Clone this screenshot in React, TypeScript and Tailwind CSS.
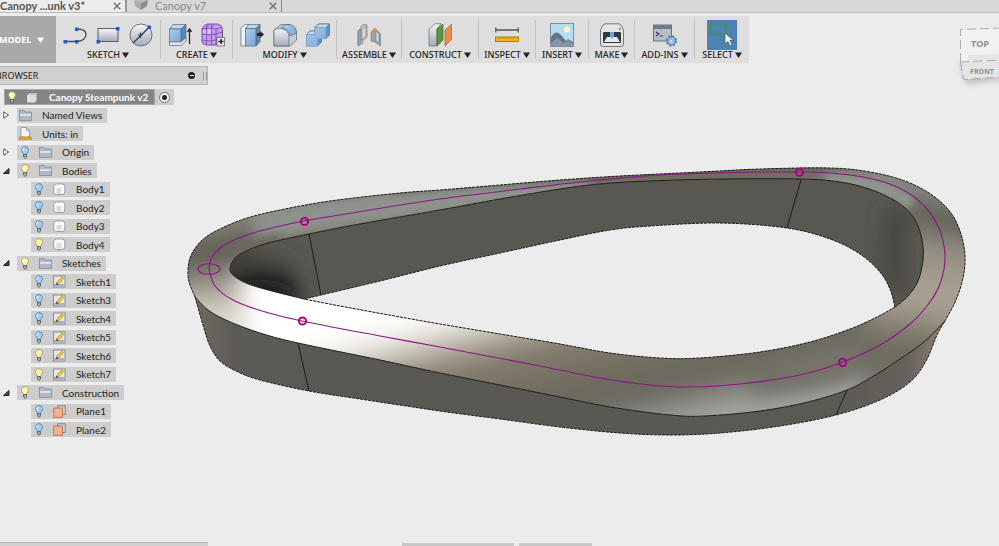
import { useState } from 'react';

const tools = [
  { name: 'SKETCH', icons: ['polyline', 'rect', 'circle'], width: 'w-[104px]' },
  { name: 'CREATE', icons: ['extrude', 'form'], width: 'w-[72px]' },
  { name: 'MODIFY', icons: ['press', 'fillet', 'combine'], width: 'w-[104px]' },
  { name: 'ASSEMBLE', icons: ['joint'], width: 'w-[65px]' },
  { name: 'CONSTRUCT', icons: ['plane'], width: 'w-[77px]' },
  { name: 'INSPECT', icons: ['measure'], width: 'w-[57px]' },
  { name: 'INSERT', icons: ['image'], width: 'w-[53px]' },
  { name: 'MAKE', icons: ['print'], width: 'w-[46px]' },
  { name: 'ADD-INS', icons: ['script'], width: 'w-[60px]' },
  { name: 'SELECT', icons: ['select'], width: 'w-[55px]' },
];

const rows = [
  { name: 'Named Views', level: 1, icon: 'folder', arrow: 'closed' },
  { name: 'Units: in', level: 1, icon: 'units' },
  { name: 'Origin', level: 1, icon: 'folder', bulb: 'off', arrow: 'closed' },
  { name: 'Bodies', level: 1, icon: 'folder', bulb: 'on', arrow: 'open' },
  { name: 'Body1', level: 2, icon: 'body', bulb: 'off' },
  { name: 'Body2', level: 2, icon: 'body', bulb: 'off' },
  { name: 'Body3', level: 2, icon: 'body', bulb: 'off' },
  { name: 'Body4', level: 2, icon: 'body', bulb: 'on' },
  { name: 'Sketches', level: 1, icon: 'folder', bulb: 'on', arrow: 'open' },
  { name: 'Sketch1', level: 2, icon: 'sketch', bulb: 'off' },
  { name: 'Sketch3', level: 2, icon: 'sketch', bulb: 'off' },
  { name: 'Sketch4', level: 2, icon: 'sketch', bulb: 'off' },
  { name: 'Sketch5', level: 2, icon: 'sketch', bulb: 'off' },
  { name: 'Sketch6', level: 2, icon: 'sketch', bulb: 'on' },
  { name: 'Sketch7', level: 2, icon: 'sketch', bulb: 'on' },
  { name: 'Construction', level: 1, icon: 'folder', bulb: 'on', arrow: 'open' },
  { name: 'Plane1', level: 2, icon: 'planes', bulb: 'off' },
  { name: 'Plane2', level: 2, icon: 'planes', bulb: 'off' },
];

type Point = [number, number];

// smooth curve through the points (Catmull-Rom converted to beziers)
function curve(pts: Point[], start = 'M') {
  let d = `${start}${pts[0][0]} ${pts[0][1]}`;
  for (let i = 0; i < pts.length - 1; i++) {
    const a = pts[i - 1] || pts[i];
    const b = pts[i];
    const c = pts[i + 1];
    const e = pts[i + 2] || c;
    d += `C${b[0] + (c[0] - a[0]) / 6} ${b[1] + (c[1] - a[1]) / 6} ${c[0] - (e[0] - b[0]) / 6} ${c[1] - (e[1] - b[1]) / 6} ${c[0]} ${c[1]}`;
  }
  return d;
}

const outerBack: Point[] = [[195, 297], [189, 282], [188, 270], [190, 258], [196, 247], [206, 237], [222, 228], [247, 218], [280, 210], [330, 201], [400, 193], [440, 190], [500, 185], [560, 180], [620, 176], [700, 172], [760, 169], [830, 168], [870, 172], [905, 181], [932, 195], [951, 213], [961, 234], [965, 256], [963, 278], [956, 300], [945, 321]];
const outerFront: Point[] = [[945, 321], [925, 341], [900, 359], [872, 377], [847, 390], [808, 402], [760, 411], [705, 416], [670, 415], [610, 407], [555, 396], [500, 385], [440, 373], [380, 360], [298, 343], [260, 333], [228, 321], [208, 310], [195, 297]];
const skirt: Point[] = [[195, 297], [203, 325], [210, 346], [220, 361], [236, 371], [260, 380], [309, 391], [360, 399], [440, 411], [500, 419], [560, 427], [620, 433], [670, 435], [720, 433], [780, 426], [836, 415], [880, 400], [910, 382], [926, 361], [937, 335], [945, 321]];
const innerBack: Point[] = [[304, 299], [268, 290], [246, 283], [233, 275], [230, 268], [235, 258], [246, 251], [268, 243], [309, 234], [360, 224], [440, 210], [500, 199], [560, 189], [600, 184], [650, 181], [720, 179], [800, 179], [840, 182], [872, 190], [900, 204], [915, 220], [922, 240], [923, 260], [918, 281], [908, 296], [895, 307]];
const innerFront: Point[] = [[895, 307], [877, 317], [850, 329], [810, 342], [760, 352], [700, 358], [660, 358], [610, 353], [560, 344], [500, 334], [440, 324], [400, 317], [340, 306], [304, 299]];
const holeBack: Point[] = [[304, 299], [321, 295], [380, 281], [440, 266], [500, 253], [560, 240], [610, 230], [650, 226], [720, 223], [787, 228], [830, 239], [860, 254], [880, 272], [890, 289], [895, 307]];
const sketchLine: Point[] = [[209, 269], [211, 259], [219, 249], [234, 240], [260, 231], [304, 221], [370, 210], [440, 199], [520, 189], [600, 180], [680, 174], [799, 172], [850, 175], [890, 184], [919, 201], [938, 226], [945, 255], [941, 281], [930, 302], [910, 324], [880, 345], [843, 362], [800, 375], [740, 384], [690, 387], [650, 385], [600, 378], [540, 366], [440, 347], [380, 336], [302, 321], [262, 311], [233, 300], [215, 286], [209, 269]];

const topFace = curve(outerBack) + curve(outerFront, 'L') + 'Z' + curve(innerBack) + curve(innerFront, 'L') + 'Z';
const innerWall = curve(innerBack) + 'L' + curve([...holeBack].reverse(), '') + 'Z';
const outerWall = curve(skirt) + curve(outerFront, 'L') + 'Z';

function Model() {
  return (
    <svg viewBox="0 0 999 476" className="col-start-1 row-start-1 block w-full overflow-visible" role="img" aria-label="Canopy model">
      <defs>
        <clipPath id="face"><path d={topFace} clipRule="evenodd" /></clipPath>
        <clipPath id="inner"><path d={innerWall} /></clipPath>
        <filter id="soft" filterUnits="userSpaceOnUse" x="50" y="50" width="1100" height="500"><feGaussianBlur stdDeviation="11" /></filter>
        <filter id="fine" filterUnits="userSpaceOnUse" x="50" y="50" width="1100" height="500"><feGaussianBlur stdDeviation="4" /></filter>
        <filter id="cubeShadow" x="-30%" y="-30%" width="160%" height="180%"><feGaussianBlur stdDeviation="3" /></filter>
        <linearGradient id="left" gradientUnits="userSpaceOnUse" x1="210" y1="205" x2="225" y2="325">
          <stop offset="0" stopColor="#868b85" />
          <stop offset="0.16" stopColor="#83857d" />
          <stop offset="0.34" stopColor="#5f5b50" />
          <stop offset="0.43" stopColor="#615d52" />
          <stop offset="0.62" stopColor="#918c84" />
          <stop offset="0.85" stopColor="#cfcabf" />
          <stop offset="1" stopColor="#dedad0" />
        </linearGradient>
        <linearGradient id="front" gradientUnits="userSpaceOnUse" x1="98.6" y1="382.5" x2="146" y2="566.5">
          <stop offset="0.08" stopColor="#fff" />
          <stop offset="0.18" stopColor="#eae7df" />
          <stop offset="0.3" stopColor="#aea799" />
          <stop offset="0.4" stopColor="#857d6f" />
          <stop offset="0.52" stopColor="#7b7467" />
          <stop offset="0.68" stopColor="#6b685b" />
          <stop offset="0.8" stopColor="#6d6b62" />
          <stop offset="0.93" stopColor="#999995" />
          <stop offset="1" stopColor="#a5a5a3" />
        </linearGradient>
        <linearGradient id="right" gradientUnits="userSpaceOnUse" x1="930" y1="168" x2="895" y2="390">
          <stop offset="0" stopColor="#8b908a" />
          <stop offset="0.1" stopColor="#838680" />
          <stop offset="0.22" stopColor="#5c594e" />
          <stop offset="0.32" stopColor="#89867f" />
          <stop offset="0.42" stopColor="#a09888" />
          <stop offset="0.6" stopColor="#aaa294" />
          <stop offset="0.72" stopColor="#857f71" />
          <stop offset="0.84" stopColor="#69665a" />
          <stop offset="1" stopColor="#7c7b74" />
        </linearGradient>
        <linearGradient id="skirtFill" gradientUnits="userSpaceOnUse" x1="190" y1="0" x2="945" y2="0">
          <stop offset="0" stopColor="#6f6c62" />
          <stop offset="0.06" stopColor="#5d5b55" />
          <stop offset="0.2" stopColor="#595751" />
          <stop offset="0.85" stopColor="#5a5952" />
          <stop offset="0.95" stopColor="#67615b" />
          <stop offset="1" stopColor="#8b8373" />
        </linearGradient>
      </defs>
      <g transform="translate(0 -66)">
        <path d={innerWall} fill="#595751" />
        <g clipPath="url(#inner)">
          <path d="M215 240L290 265L300 320L220 300Z" fill="#3f3e3a" filter="url(#soft)" />
          <ellipse cx="262" cy="292" rx="36" ry="12" fill="#0c0c0c" filter="url(#soft)" />
          <path d="M908 210C900 240 898 260 905 300L885 280C888 250 885 230 888 210Z" fill="#403e38" filter="url(#soft)" />
        </g>
        <path d={outerWall} fill="url(#skirtFill)" />
        <path d={topFace} fill="#7b7669" fillRule="evenodd" />
        <g clipPath="url(#face)">
          <path d={curve([[250, 226], [350, 211], [440, 199], [530, 189], [590, 184]])} fill="none" stroke="#8d928c" strokeWidth="28" filter="url(#fine)" />
          <path d={curve([[390, 188], [500, 180], [620, 174], [760, 168], [840, 166]])} fill="none" stroke="#55534a" strokeWidth="8" filter="url(#fine)" />
          <path d="M100 120H252V420H100Z" fill="url(#left)" filter="url(#soft)" />
          <path d={curve([[225, 255], [250, 246], [280, 238]])} fill="none" stroke="#68655b" strokeWidth="8" filter="url(#fine)" />
          <path d="M240 268H870V480H240Z" fill="url(#front)" filter="url(#soft)" />
          <path d={curve([[750, 384], [800, 379], [850, 366], [910, 342]])} fill="none" stroke="#6a675b" strokeWidth="22" filter="url(#soft)" />
          <path d="M866 150H1060V450H866Z" fill="url(#right)" filter="url(#soft)" />
          <path d={curve([[600, 180], [700, 176], [820, 173]])} fill="none" stroke="#706d61" strokeWidth="12" filter="url(#fine)" />
          <path d={curve([[825, 179], [855, 182], [890, 192], [912, 204]])} fill="none" stroke="#929892" strokeWidth="13" filter="url(#fine)" />
        </g>
        <g fill="none" stroke="#1d1c1a" strokeWidth="1">
          <path d={curve(innerBack)} />
          <path d={curve(outerFront)} />
          <path d="M309 234L321 295M298 343L309 391M801 180L787 228M847 390L836 415" />
          <g strokeDasharray="3 1">
            <path d={curve(outerBack)} />
            <path d={curve(innerFront)} />
            <path d={curve(holeBack)} />
            <path d={curve(skirt)} />
          </g>
        </g>
        <g fill="none" stroke="#8b1585" strokeWidth="1.1">
          <path d={curve(sketchLine)} />
          <ellipse cx="209" cy="269" rx="11" ry="5.3" />
        </g>
        <g fill="none" stroke="#b00080" strokeWidth="2">
          <circle cx="304.500" cy="221.500" r="3.600" />
          <circle cx="302.500" cy="321" r="3.600" />
          <circle cx="799.500" cy="172.300" r="3.600" />
          <circle cx="842.600" cy="362.400" r="3.600" />
        </g>
        <path d="M960 62L966 84L1004 79V58Z" fill="#bbb" filter="url(#cubeShadow)" />
        <path d="M960.500 29.500L1004 28V59L960.500 62Z" fill="#f1f1f1" />
        <path d="M960.500 62L1004 59V77L963.500 79.500Z" fill="#e4e4e5" />
        <path d="M968 55L999 54V61L968 62Z" fill="#e3e5e8" />
        <path d="M960.500 62V29.500L1004 28M960.500 62L1004 60M960.500 62L963.500 79.500L1004 77" fill="none" stroke="#a9abad" strokeDasharray="9 4" />
        <g className="font-['Open_Sans',sans-serif] font-bold" fill="#8b9096" textAnchor="middle">
          <text x="980" y="47" fontSize="9">TOP</text>
          <text x="982" y="74" fontSize="7">FRONT</text>
        </g>
      </g>
    </svg>
  );
}

function ToolIcon({ name }: { name: string }) {
  const outline = '#5d6670';
  return (
    <svg viewBox="0 0 24 24" className="size-6" aria-hidden="true">
      <defs>
        <linearGradient id={`${name}-grey`} x1="0" y1="0" x2="0" y2="1"><stop stopColor="#f5f6f8" /><stop offset="1" stopColor="#a3abba" /></linearGradient>
        <linearGradient id={`${name}-blue`} x1="0" y1="0" x2="1" y2="1"><stop stopColor="#a9cdf0" /><stop offset="1" stopColor="#79a5d6" /></linearGradient>
      </defs>
      {name === 'polyline' && (
        <g>
          <path d="M2 18.500H14C20 18.500 23 15 23 11.500S20 6 14 6" fill="none" stroke="#444b55" strokeWidth="1.300" />
          <path d="M.5 17H4V20.500H.5ZM12 17H15.500V20.500H12ZM12 4.500H15.500V8H12Z" fill="#2459c8" />
        </g>
      )}
      {name === 'rect' && (
        <g>
          <rect x="2" y="5.500" width="20" height="13" fill="url(#rect-grey)" stroke="#555e69" />
          <path d="M.5 17H4V20.500H.5ZM20 4H23.500V7.500H20Z" fill="#2459c8" />
        </g>
      )}
      {name === 'circle' && (
        <g>
          <circle cx="12" cy="12" r="11" fill="url(#circle-grey)" stroke="#6a727c" />
          <path d="M4 20L20 4.500M9 12H14M11.500 9.500V15" stroke="#333a44" strokeWidth="1.200" />
          <path d="M18.500 2.500H22V6H18.500Z" fill="#2459c8" />
        </g>
      )}
      {name === 'extrude' && (
        <g stroke={outline} strokeWidth=".7">
          <path d="M1.500 18V22.500H13L18 18V14Z" fill="#e5e7eb" />
          <path d="M1.500 6L5 1.500H18L13 6Z" fill="#b9d9f5" />
          <path d="M13 6L18 1.500V14.500L13 19Z" fill="#5687bd" />
          <path d="M1.500 6H13V19H1.500Z" fill="url(#extrude-blue)" />
          <path d="M21.500 21V7M19.500 9L21.500 6L23.500 9" fill="none" stroke="#22262c" strokeWidth="1.300" />
        </g>
      )}
      {name === 'form' && (
        <g>
          <path d="M1 6Q3 1 8 1H17Q21 2 21.500 6V16Q20 20 15 22H5Q1 21 1 18Z" fill="#c79bf5" stroke="#78529f" />
          <path d="M1 6Q8 4 15 6Q19 5 21 4M1 11Q8 13 15 11L21.500 9M1 17Q8 19 15 17L21.500 14M5.500 2.500V21.500M10.500 2V22M15 6V22M8 1L5 5M13 1L10 5" fill="none" stroke="#744a9f" strokeWidth=".8" />
          <path d="M2 7H5V10H2ZM6.500 6.500H10V10.500H6.500Z" fill="#dfc4ff" />
          <path d="M16 14.500H23.500V23H16Z" fill="#efefef" stroke="#555" strokeWidth=".7" />
          <path d="M17.500 18.500H22.500M20 16V21" stroke="#222" strokeWidth="1.500" />
        </g>
      )}
      {name === 'press' && (
        <g stroke={outline} strokeWidth=".7">
          <path d="M1 5L5 1.500H9L6 5V23H1Z" fill="#f1f2f4" />
          <path d="M5.500 5.500L9 1.500H20L16 5.500Z" fill="#b9d9f5" />
          <path d="M16 5.500L20 1.500V18.500L16 23Z" fill="#5687bd" />
          <path d="M5.500 5.500H16V23H5.500Z" fill="url(#press-blue)" />
          <path d="M17 10H20V8L24 11.500L20 15V13H17Z" fill="#20242b" stroke="none" />
        </g>
      )}
      {name === 'fillet' && (
        <g stroke={outline} strokeWidth=".7">
          <path d="M1 7L8 1.500H16Q23 3 23.500 10V17L17 23H1Z" fill="#c8ccd2" />
          <path d="M8 5L13 1.500H17Q23 3 23.500 10L17 13Q16 6 8 5Z" fill="url(#fillet-blue)" />
          <path d="M1 7Q6 4 10 6Q16 8 16 14V23H1Z" fill="url(#fillet-grey)" />
        </g>
      )}
      {name === 'combine' && (
        <g stroke={outline} strokeWidth=".7">
          <path d="M9 4L13 1H23.500V12L20 15.500H15.500V19L11.500 23H.5V11.500L4 8H9Z" fill="#5f90c7" />
          <path d="M9 4L13 1H23.500L20 4.500H9ZM.5 11.500L4 8H9V11.500Z" fill="#c3ddf5" />
          <path d="M9 4.500H20V15.500H11.500V23H.5V11.500H9Z" fill="url(#combine-blue)" stroke="#7aa3ce" />
        </g>
      )}
      {name === 'joint' && (
        <g stroke="#7b838c" strokeWidth=".7">
          <path d="M1 8L4 5V3Q7 0 10 2V14L6 17V20L1 23Z" fill="#c4c9cf" />
          <path d="M4 6V20L1 23V8ZM14 9L18 5L23.500 11V23L18 19L14 18Z" fill="#9aa2ab" />
          <path d="M5 6L9 3V13L5 17ZM19 8L22 11V20L19 18Z" fill="#d7dade" />
          <path d="M9 9L11 11L9 13ZM16 6L18 5V10H15Z" fill="#e7904d" stroke="none" />
        </g>
      )}
      {name === 'plane' && (
        <g strokeWidth=".7">
          <path d="M1 6L7 .8H13L9 6V23H1Z" fill="url(#plane-grey)" stroke={outline} />
          <path d="M9 6L15 1V17L9 23Z" fill="#55983d" stroke="#42672f" />
          <path d="M17 7L24 1V16L17 23Z" fill="#e98b4d" stroke="#ae5c29" />
        </g>
      )}
      {name === 'measure' && (
        <g>
          <path d="M.5 7H23.500M.8 4.500V9.500M23.200 4.500V9.500" stroke="#555" strokeWidth="1.300" />
          <rect x=".5" y="14" width="23" height="4.500" fill="#f3b51f" stroke="#b47a0a" />
          <path d="M4 14V16M7 14V16M10 14V16M13 14V16M16 14V16M19 14V16" stroke="#875600" strokeWidth=".5" />
        </g>
      )}
      {name === 'image' && (
        <g>
          <rect x=".5" y=".5" width="23" height="23" fill="#b6dcf1" stroke="#7790a3" />
          <circle cx="17" cy="6.500" r="3" fill="#fff6bd" />
          <path d="M1 14Q6 6 11 12L16 18L18 16L23 19V23H1Z" fill="#63738a" />
          <path d="M1 20L7 15L14 20L19 17L23 21V23H1Z" fill="#8794a7" />
        </g>
      )}
      {name === 'print' && (
        <g>
          <path d="M3 2L5 .8H19L21 2L23.500 7V21Q23.500 23.500 21 23.500H3Q.5 23.500 .5 21V7Z" fill="#e4e5e7" stroke="#74787d" />
          <rect x="3" y="9" width="18" height="11" rx="1" fill="#35393e" />
          <path d="M7 14H17L20 19H4Z" fill="#e8eaed" />
          <path d="M10 9H14V13L12 16L10 13Z" fill="#6ba8e5" />
          <circle cx="20" cy="6" r="1" fill="#3b9d45" />
        </g>
      )}
      {name === 'script' && (
        <g>
          <rect x=".5" y="2" width="18" height="16" fill="#b8bec9" stroke="#697180" />
          <path d="M1 2H18V6H1Z" fill="#727b8c" />
          <path d="M3 9L6 11L3 13M7 13H10" fill="none" stroke="#313945" strokeWidth="1.200" />
          <circle cx="18.500" cy="18" r="4" fill="#a8c8e9" stroke="#6488b5" strokeWidth="1.500" />
          <circle cx="18.500" cy="18" r="4.800" fill="none" stroke="#6488b5" strokeWidth="2" strokeDasharray="2 1.770" />
          <circle cx="18.500" cy="18" r="1.500" fill="#f3f7fb" stroke="#6488b5" strokeWidth=".6" />
        </g>
      )}
      {name === 'select' && (
        <g>
          <rect x="1" y="1" width="15" height="10" fill="none" stroke="#4a9438" strokeWidth="1.400" />
          <path d="M15 10V21L17.800 18.500L20 23L22.200 22L20 17.500H23.500Z" fill="#f4f4f4" stroke="#4c5d70" strokeWidth=".8" />
        </g>
      )}
    </svg>
  );
}

function Bulb({ on }: { on: boolean }) {
  return (
    <svg viewBox="0 0 8 13" className="block h-[13px] w-2" aria-hidden="true">
      <path d="M2.300 8.500Q2.300 7.300 1.300 6Q.3 4.800 .5 3.500Q1 .6 4 .6T7.500 3.500Q7.700 4.800 6.700 6Q5.700 7.300 5.700 8.500Z" fill={on ? '#fff6a8' : '#9fcdf4'} stroke={on ? '#9c9566' : '#587da2'} strokeWidth=".8" />
      <path d="M3 2Q1.800 3 2.200 5" fill="none" stroke="#fff" />
      <path d="M2.500 8.500H5.500V11L4 12.500L2.500 11Z" fill="#aaa" stroke="#555" strokeWidth=".8" />
    </svg>
  );
}

function RowIcon({ name }: { name: string }) {
  return (
    <svg viewBox="0 0 13 13" className="block size-[13px]" aria-hidden="true">
      {name === 'folder' && (
        <g>
          <path d="M.5 1.500H5L6 3H12.500V11.500H.5Z" fill="#b0b8c8" stroke="#838a98" strokeWidth=".8" />
          <path d="M1 5H12V7H1Z" fill="#dcdfe6" />
        </g>
      )}
      {name === 'units' && (
        <g>
          <path d="M2 .5H7.500L10.500 3.500V10H2Z" fill="#f5f6f8" stroke="#8b919c" strokeWidth=".8" />
          <path d="M7.500 .5V3.500H10.500" fill="none" stroke="#8b919c" strokeWidth=".8" />
          <path d="M.5 10H12.500V12.500H.5Z" fill="#e6a229" stroke="#b57a18" strokeWidth=".5" />
        </g>
      )}
      {name === 'body' && (
        <g>
          <rect x=".8" y="1" width="11" height="10.500" rx="2.500" fill="#fafafa" stroke="#8d8d8d" strokeWidth=".8" />
          <path d="M3.500 5H8.500V10.500H3.500Z" fill="#dcdcdf" />
        </g>
      )}
      {name === 'root' && (
        <g>
          <path d="M1 4L3 1.500H11.500V9L9.500 11.500H1Z" fill="#b9c0ca" stroke="#68707b" strokeWidth=".6" />
          <path d="M1 4H9.500V11.500H1Z" fill="#dce1e8" />
        </g>
      )}
      {name === 'sketch' && (
        <g>
          <rect x=".5" y="1" width="11.500" height="11" fill="#e6e8ed" stroke="#7d858f" strokeWidth=".9" />
          <path d="M1 9H11.500V11.500H1Z" fill="#a7b2c4" />
          <path d="M3.500 9.500L10.500 2" stroke="#9b7613" strokeWidth="2.600" />
          <path d="M4.500 8.500L11 1.500" stroke="#ffd83c" strokeWidth="1.800" />
          <path d="M3 10L5 9.300L4 8Z" fill="#333" />
        </g>
      )}
      {name === 'planes' && (
        <g strokeWidth=".9">
          <path d="M4.500 .8H12.300V9.500H4.500Z" fill="#ccd2dc" stroke="#76808e" />
          <path d="M.7 3H9.500V12.300H.7Z" fill="#f1b28c" stroke="#bd714a" />
        </g>
      )}
    </svg>
  );
}

function Caret() {
  return (
    <svg viewBox="0 0 7 6" className="h-[6px] w-[7px]" aria-hidden="true">
      <path d="M0 .5H7L3.500 6Z" fill="currentColor" />
    </svg>
  );
}

function CloseIcon() {
  return (
    <svg viewBox="0 0 8 8" className="size-2" aria-hidden="true">
      <path d="M.7 .7L7.300 7.300M7.300 .7L.7 7.300" stroke="#707070" strokeWidth="1.300" />
    </svg>
  );
}

function Browser() {
  const [visible, setVisible] = useState(rows.map((row) => row.bulb === 'on'));
  const [active, setActive] = useState(true);

  const toggle = (index: number) => {
    setVisible(visible.map((v, i) => (i === index ? !v : v)));
  };

  return (
    <aside className="z-10 col-start-1 row-start-1 w-52 text-[10px] leading-4 text-[#222]">
      <header className="flex h-[19px] items-center gap-2 border border-l-0 border-[#b5b5b5] bg-[#d1d1d1]">
        <h2 className="-ml-1 flex-1 font-['Noto_Sans',sans-serif] text-[9px]">BROWSER</h2>
        <button aria-label="Collapse browser" className="flex size-[7px] items-center justify-center rounded-full bg-[#222]">
          <span className="h-px w-1 bg-[#ddd]" />
        </button>
        <span className="h-2 w-1 border-x border-[#999]" />
      </header>
      <ul className="pt-[3px]">
        <li className="flex h-[18px] items-center pl-1">
          <div className="flex h-4 items-center border border-[#a5a5a5] bg-[#858585] pr-[6px] pl-[3px] font-bold text-white">
            <Bulb on />
            <span className="mx-[10px]"><RowIcon name="root" /></span>
            Canopy Steampunk v2
          </div>
          <label className="flex h-4 items-center bg-[#cdcdcd] px-1">
            <input
              type="radio"
              aria-label="Activate Canopy Steampunk v2"
              checked={active}
              onChange={() => setActive(true)}
              className="size-[11px] appearance-none rounded-full border border-[#777] bg-[radial-gradient(circle,#222_2px,#eef2f8_3px)]"
            />
          </label>
        </li>
        {rows.map((row, i) => (
          <li key={row.name} className="flex h-[19px] items-center pl-[3px] even:h-[18px]">
            <span className={row.level === 2 ? 'w-7' : 'w-[14px]'}>
              {row.arrow && (
                <button aria-label={`Toggle ${row.name}`} className="block">
                  <svg viewBox="0 0 7 8" className="h-2 w-[7px]">
                    {row.arrow === 'open'
                      ? <path d="M.5 6.500L6 1.500V6.500Z" fill="#444" stroke="#222" />
                      : <path d="M.8 .8L5.500 4L.8 7.200Z" fill="#fff" stroke="#444" strokeWidth=".9" />}
                  </svg>
                </button>
              )}
            </span>
            <div className={`flex h-[15px] items-center bg-[#cdcdcd] pr-[5px] ${row.bulb ? 'pl-1' : 'pl-[2px]'}`}>
              {row.bulb && (
                <button aria-label={`Show ${row.name}`} aria-pressed={visible[i]} className="mr-[10px]" onClick={() => toggle(i)}>
                  <Bulb on={visible[i]} />
                </button>
              )}
              <RowIcon name={row.icon} />
              <span className="ml-[10px]">{row.name}</span>
            </div>
          </li>
        ))}
      </ul>
    </aside>
  );
}

function App() {
  return (
    <div className="flex min-h-screen flex-col overflow-hidden bg-[#ececec] font-['Lato','Open_Sans',sans-serif]">
      <nav className="flex h-[13px] items-center border-b border-[#bcbcbc] bg-[#d8d8d8] text-[11px] leading-3">
        <div className="flex h-3 w-[127px] items-center justify-between border-r-2 border-[#999] bg-[#ececec] pr-1">
          <a href="#v3" className="font-bold text-[#555]">Canopy ...unk v3*</a>
          <button aria-label="Close Canopy v3"><CloseIcon /></button>
        </div>
        <div className="flex h-3 w-[155px] items-center border-r border-[#888] pr-1 pl-[7px]">
          <svg viewBox="0 0 14 12" className="mr-[7px] h-3 w-[14px]" aria-hidden="true">
            <path d="M0 0L7 2V10L1 6Z" fill="#aaa" />
            <path d="M7 2L14 0L13 6L7 10Z" fill="#8c8c8c" />
            <path d="M0 0H14L7 3Z" fill="#bcbcbc" />
          </svg>
          <a href="#v7" className="flex-1 text-[#8a8a8a]">Canopy v7</a>
          <button aria-label="Close Canopy v7"><CloseIcon /></button>
        </div>
      </nav>
      <div className="mt-[3px] mb-[3px] flex h-[47px] w-fit bg-[#dedede] font-['Noto_Sans','Open_Sans',sans-serif] text-[9px] leading-[10px] text-[#222]">
        <button className="flex w-14 items-center gap-[6px] bg-[#a9a9a9] font-bold text-white">
          <span className="-ml-px">MODEL</span>
          <Caret />
        </button>
        <div className="flex py-1">
          {tools.map((tool) => (
            <div key={tool.name} className={`flex flex-col items-center border-l border-[#c2c2c2] first:border-l-0 ${tool.width}`}>
              <div className="flex h-[30px] shrink-0 items-center gap-[9px]">
                {tool.icons.map((icon) => (
                  <button
                    key={icon}
                    aria-label={icon}
                    className={icon === 'select' ? 'flex size-[30px] items-center justify-center bg-[#4d82b4]' : ''}
                  >
                    <ToolIcon name={icon} />
                  </button>
                ))}
              </div>
              <button className="flex items-center gap-[2px] font-medium whitespace-nowrap">
                {tool.name}
                <Caret />
              </button>
            </div>
          ))}
        </div>
      </div>
      <main className="grid flex-1 content-start">
        <Model />
        <Browser />
      </main>
      <footer className="flex h-1 items-end">
        <div className="h-1 w-52 border-t border-[#b5b5b5] bg-[#d1d1d1]" />
        <div className="ml-[194px] h-[3px] w-28 bg-[#c8c8c8]" />
        <div className="ml-[5px] h-[3px] w-[73px] bg-[#c8c8c8]" />
      </footer>
    </div>
  );
}

export default App;
